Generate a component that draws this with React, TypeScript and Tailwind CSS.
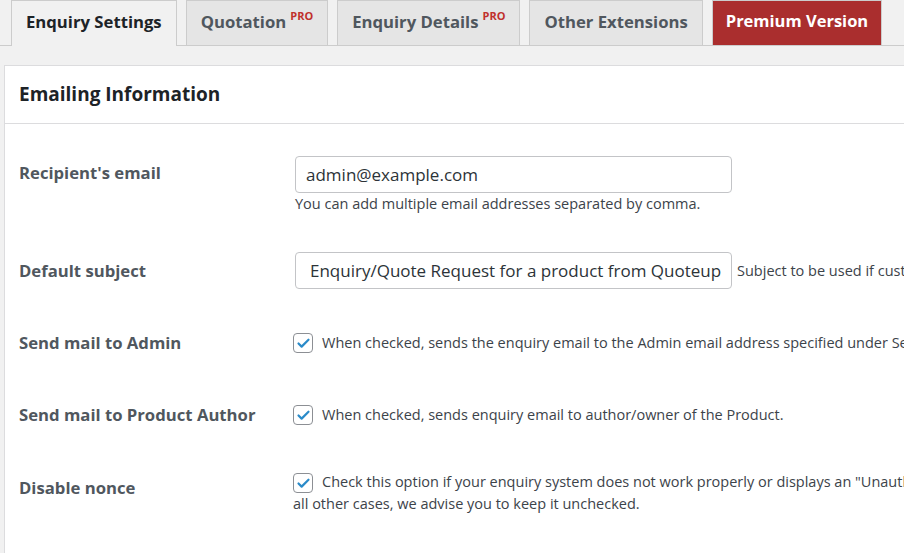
import { Check } from 'lucide-react';

const tabs = [
  { label: 'Enquiry Settings', active: true },
  { label: 'Quotation', pro: true },
  { label: 'Enquiry Details', pro: true },
  { label: 'Other Extensions' },
];

const CheckBox = () => (
  <span className="inline-flex h-[20px] w-[20px] shrink-0 items-center justify-center rounded-[4px] border border-[#8c8f94] bg-white">
    <Check className="h-[15px] w-[15px] text-[#2a8bc9]" strokeWidth={3.5} />
  </span>
);

const App = () => {
  return (
    <div className="h-[553px] w-[904px] overflow-hidden bg-[#f1f1f1] font-['Open_Sans',sans-serif]">
      {/* Tabs */}
      <div className="flex h-[46px] items-end gap-[9px] border-b border-[#cccccc] pl-[11px]">
        {tabs.map((tab) => (
          <div
            key={tab.label}
            className={
              tab.active
                ? '-mb-px flex h-[46px] items-center border border-b-0 border-[#cccccc] bg-[#f1f1f1] px-[14px] pb-[4px] text-[16.7px] font-bold text-[#1d2327]'
                : 'flex h-[45px] items-center border border-b-0 border-[#cccccc] bg-[#e5e5e5] px-[14px] pb-[3px] text-[16.7px] font-bold text-[#50575e]'
            }
          >
            <span className="whitespace-nowrap">{tab.label}</span>
            {tab.pro && <sup className="ml-[4px] text-[11px] font-bold text-[#c0302c]">PRO</sup>}
          </div>
        ))}
        <div className="flex h-[45px] items-center border border-b-0 border-[#cccccc] bg-[#aa2e2e] px-[13px] pb-[3px] text-[16.5px] font-bold whitespace-nowrap text-white">
          Premium Version
        </div>
      </div>

      {/* Panel */}
      <div className="mt-[19px] ml-[4px] w-[1100px] border border-[#dcdcde] bg-white">
        <div className="flex h-[58px] items-center border-b border-[#dcdcde] px-[14px]">
          <h2 className="text-[19px] font-bold text-[#1d2327]">Emailing Information</h2>
        </div>

        <div className="flex flex-col px-[14px] text-[14.5px] text-[#3c434a]">
          {/* Recipient */}
          <div className="flex items-start pt-[32px]">
            <div className="mt-[5px] w-[276px] shrink-0 text-[16.7px] leading-6 font-bold text-[#50575e]">Recipient's email</div>
            <div>
              <div className="flex h-[37px] w-[437px] items-center rounded-[4px] border border-[#c3c4c7] px-[10px] text-[17px] text-[#2c3338]">
                admin@example.com
              </div>
              <p className="mt-[1px] leading-5 whitespace-nowrap">You can add multiple email addresses separated by comma.</p>
            </div>
          </div>

          {/* Subject */}
          <div className="flex items-center pt-[38px]">
            <div className="w-[276px] shrink-0 text-[16.7px] leading-6 font-bold text-[#50575e]">Default subject</div>
            <div className="flex h-[37px] w-[437px] shrink-0 items-center overflow-hidden rounded-[4px] border border-[#c3c4c7] px-[14px] text-[17px] whitespace-nowrap text-[#2c3338]">
              Enquiry/Quote Request for a product from Quoteup
            </div>
            <span className="ml-[5px] whitespace-nowrap">Subject to be used if customer does not add a subject.</span>
          </div>

          {/* Admin */}
          <div className="flex items-center pt-[42px]">
            <div className="w-[274px] shrink-0 text-[16.7px] leading-6 font-bold text-[#50575e]">Send mail to Admin</div>
            <CheckBox />
            <span className="ml-[9px] leading-5 whitespace-nowrap">
              When checked, sends the enquiry email to the Admin email address specified under Settings -&gt; General.
            </span>
          </div>

          {/* Author */}
          <div className="flex items-center pt-[48px]">
            <div className="w-[274px] shrink-0 text-[16.7px] leading-6 font-bold text-[#50575e]">Send mail to Product Author</div>
            <CheckBox />
            <span className="ml-[9px] leading-5 whitespace-nowrap">When checked, sends enquiry email to author/owner of the Product.</span>
          </div>

          {/* Nonce */}
          <div className="flex items-start pt-[42px] pb-[40px]">
            <div className="mt-[7px] w-[274px] shrink-0 text-[16.7px] leading-6 font-bold text-[#50575e]">Disable nonce</div>
            <p className="leading-[22px] whitespace-nowrap">
              <span className="inline-flex translate-y-[4px] align-baseline"><CheckBox /></span>
              <span className="ml-[9px]">
                Check this option if your enquiry system does not work properly or displays an "Unauthorized enquiry" error message. In
              </span>
              <br />
              all other cases, we advise you to keep it unchecked.
            </p>
          </div>
        </div>
      </div>
    </div>
  );
};

export default App;
